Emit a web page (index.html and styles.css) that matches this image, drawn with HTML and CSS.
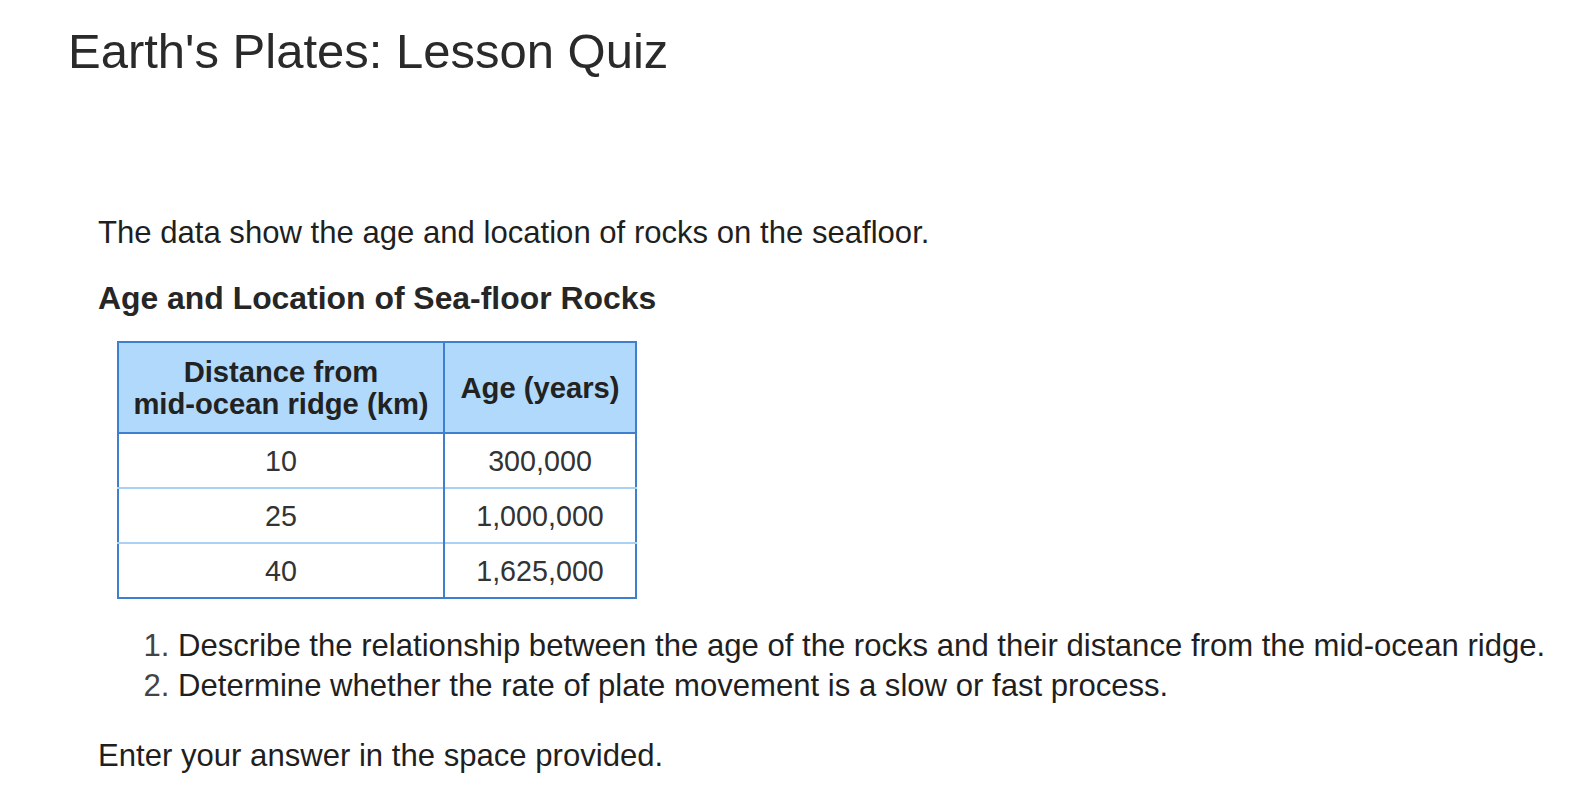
FILE: index.html
```html
<!DOCTYPE html>
<html lang="en">
<head>
<meta charset="utf-8">
<title>Earth's Plates: Lesson Quiz</title>
<link rel="stylesheet" href="styles.css">
</head>
<body>
<div class="page">
  <h1 class="title">Earth's Plates: Lesson Quiz</h1>
  <div class="question">
    <p class="intro">The data show the age and location of rocks on the seafloor.</p>
    <p class="table-title">Age and Location of Sea-floor Rocks</p>
    <table class="data">
      <thead>
        <tr>
          <th class="col-dist">Distance from<br>mid-ocean ridge (km)</th>
          <th class="col-age">Age (years)</th>
        </tr>
      </thead>
      <tbody>
        <tr><td>10</td><td>300,000</td></tr>
        <tr><td>25</td><td>1,000,000</td></tr>
        <tr><td>40</td><td>1,625,000</td></tr>
      </tbody>
    </table>
    <ol class="tasks">
      <li>Describe the relationship between the age of the rocks and their distance from the mid-ocean ridge.</li>
      <li>Determine whether the rate of plate movement is a slow or fast process.</li>
    </ol>
    <p class="enter">Enter your answer in the space provided.</p>
  </div>
</div>
</body>
</html>
```
FILE: styles.css
```css
html, body {
  margin: 0;
  padding: 0;
  background: #ffffff;
}
body {
  font-family: "Liberation Sans", Arial, sans-serif;
  color: #1f1f1f;
}
.page {
  padding: 23px 0 0 68px;
}
.title {
  margin: 0;
  font-size: 49px;
  line-height: 56px;
  font-weight: 400;
  color: #2a2a2a;
}
.question {
  margin: 134px 0 0 30px;
  font-size: 31.1px;
  line-height: 40px;
}
.intro {
  margin: 0;
}
.table-title {
  margin: 25px 0 0 0;
  font-weight: 700;
  font-size: 31.9px;
  color: #262626;
}
.data {
  margin: 23px 0 0 19px;
  border-collapse: collapse;
  border: 2px solid #3f7fd0;
  font-size: 28.7px;
  line-height: 32px;
}
.data th {
  background: #b1d9fb;
  color: #222;
  font-weight: 700;
  font-size: 29.2px;
  height: 89px;
  padding: 0 10px;
  border-bottom: 2px solid #3f7fd0;
  text-align: center;
}
.data .col-dist {
  width: 304px;
  border-right: 2px solid #3f7fd0;
}
.data .col-age {
  width: 170px;
}
.data td {
  height: 53px;
  padding: 0;
  text-align: center;
  color: #333;
  border-top: 2px solid #a9d1f6;
}
.data td:first-child {
  border-right: 2px solid #3f7fd0;
}
.data tbody tr:first-child td {
  border-top: 0;
}
.tasks {
  margin: 27px 0 0 0;
  padding-left: 80px;
}
.tasks li::marker {
  color: #444;
}
.enter {
  margin: 30px 0 0 0;
}
```
